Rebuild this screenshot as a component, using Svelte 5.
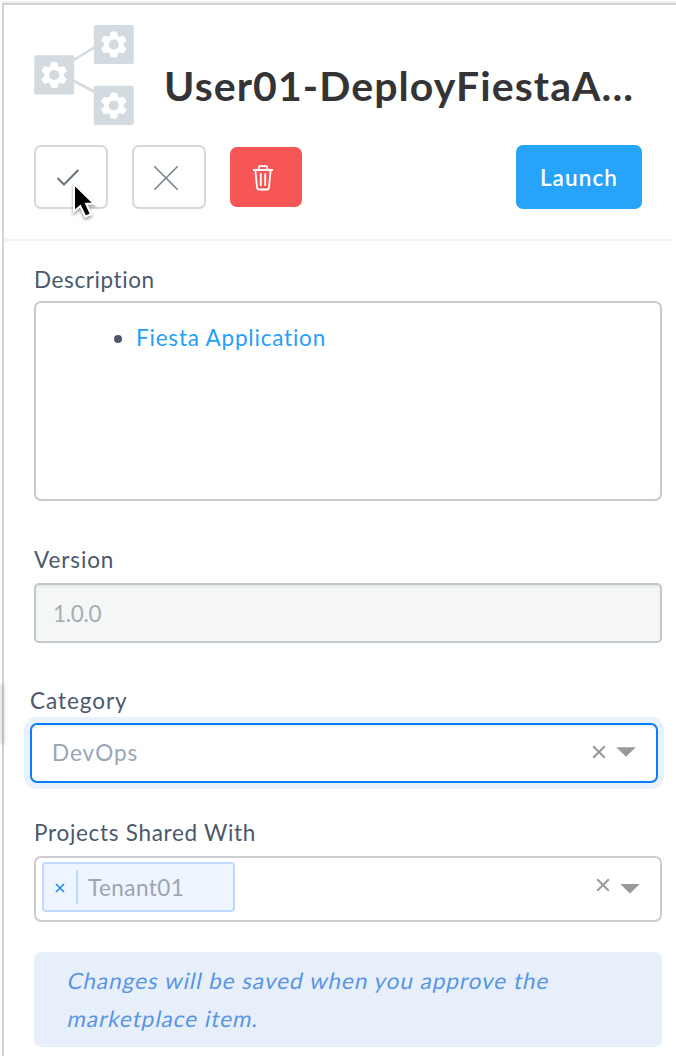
<script>
  const gear = 'M-2.6 -12.5H2.6L3.7 -8.6L5.9 -7.3L9.7 -8.4L12.3 -4L9.3 -1.2V1.2L12.3 4L9.7 8.4L5.9 7.3L3.7 8.6L2.6 12.5H-2.6L-3.7 8.6L-5.9 7.3L-9.7 8.4L-12.3 4L-9.3 1.2V-1.2L-12.3 -4L-9.7 -8.4L-5.9 -7.3L-3.7 -8.6Z';
  const nodes = [
    { x: 20.2, y: 50 },
    { x: 79.8, y: 19.5 },
    { x: 79.8, y: 80.5 }
  ];
</script>

{#snippet controls(drop)}
  <svg class="controls" width="46" height="18" viewBox="0 0 46 18">
    <path d="M3.2 2.2L14.8 13.8M14.8 2.2L3.2 13.8" fill="none" stroke="#999" stroke-width="2" />
    <path d="M26.3 0H45.8L36 9.6Z" transform="translate(0 {drop})" fill="#999" />
  </svg>
{/snippet}

<div class="panel">
  <header>
    <div class="heading">
      <svg width="100" height="100" viewBox="0 0 100 100">
        <path d="M39 35.5L61 22M39 55.5L61 67" fill="none" stroke="#d3dae0" stroke-width="2.6" />
        {#each nodes as n}
          <rect x={n.x - 20} y={n.y - 19.7} width="40" height="39.2" rx="2" fill="#d3dae0" />
          <g transform="translate({n.x} {n.y})">
            <path d={gear} fill="#fff" stroke="#fff" stroke-width="1" stroke-linejoin="round" />
            <circle r="5.1" fill="#d3dae0" />
          </g>
        {/each}
      </svg>
      <h1>User01-DeployFiestaA...</h1>
    </div>
    <div class="actions">
      <button class="outline" aria-label="Approve">
        <svg width="24" height="18" viewBox="0 0 24 18"><path d="M1.5 9L8 15.5L22.3 1" fill="none" stroke="#6b7780" stroke-width="2.1" /></svg>
        <svg class="pointer" width="28" height="42" viewBox="0 0 28 42">
          <path d="M3 2V29.5L9.3 24L14.4 34.7L20 32.2L15.1 21.8H23.2Z" fill="#000" stroke="#fff" stroke-width="2" />
        </svg>
      </button>
      <button class="outline" aria-label="Reject">
        <svg width="26" height="26" viewBox="0 0 26 26"><path d="M1.3 1.3L24.7 24.7M24.7 1.3L1.3 24.7" fill="none" stroke="#77828a" stroke-width="1.6" /></svg>
      </button>
      <button class="danger" aria-label="Delete">
        <svg width="20" height="26" viewBox="0 0 20 26" fill="none" stroke="#fff" stroke-width="1.8">
          <path d="M0 5H20M5.3 5L6 2Q6.2 1.2 7 1.2H13Q13.8 1.2 14 2L14.7 5M2.3 5L4 22.4Q4.3 24.5 6 24.5H14Q15.7 24.5 16 22.4L17.7 5M7.8 8.3V21M12.2 8.3V21" />
        </svg>
      </button>
      <button class="launch"><span>Launch</span></button>
    </div>
  </header>

  <main>
    <div class="label l-desc">Description</div>
    <div class="description">
      <ul><li><a href="#fiesta">Fiesta Application</a></li></ul>
    </div>

    <div class="label l-ver">Version</div>
    <div class="input"><span>1.0.0</span></div>

    <div class="category">
      <div class="label l-cat">Category</div>
      <div class="select"><span>DevOps</span>{@render controls(3.2)}</div>
    </div>

    <div class="label l-proj">Projects Shared With</div>
    <div class="multi">
      <div class="tag">
        <svg width="10" height="10" viewBox="0 0 10 10"><path d="M1 1L9 9M9 1L1 9" stroke="#1683ff" stroke-width="1.5" /></svg>
        <i></i>
        <span>Tenant01</span>
      </div>
      {@render controls(7)}
    </div>

    <div class="notice">
      <div class="n1">Changes will be saved when you approve the</div>
      <div class="n2">marketplace item.</div>
    </div>
  </main>
  <div class="edge"></div>
</div>

<style>
  :global(body) { background: #fff; overflow: hidden; }
  * { box-sizing: border-box; }
  .panel {
    position: relative;
    height: 1053px;
    margin: 3px 0 0 2px;
    border-top: 2px solid #d3d3d3;
    border-left: 2px solid #d3d3d3;
    box-shadow: 0 -2px 0 #efefef;
    font-family: Lato, "Open Sans", sans-serif;
    font-size: 22.5px;
    font-variant-ligatures: none;
    letter-spacing: 0.75px;
    color: #4b586b;
    white-space: nowrap;
  }
  header { width: 668px; height: 236px; border-bottom: 2px solid #f2f2f2; padding: 20px 30px 0; }
  .heading { display: flex; height: 120px; gap: 30px; }
  .heading svg { flex: none; }
  h1 { margin: 36px 0 0; font-size: 41px; line-height: 50px; height: 50px; font-weight: 700; color: #343436; letter-spacing: 1.08px; }
  .actions { display: flex; align-items: center; height: 64px; }
  button { position: relative; display: flex; align-items: center; justify-content: center; margin: 0; padding: 0; border: 0; border-radius: 7px; font: inherit; }
  .outline { width: 74px; height: 64px; margin-right: 24px; border: 2px solid #d3d9de; background: #fff; }
  .outline > svg:first-child { margin: 2px 0 0 -6px; }
  .outline .pointer { position: absolute; z-index: 2; left: 35px; top: 35px; filter: drop-shadow(0 2px 1.5px rgba(0, 0, 0, 0.4)); }
  .danger { width: 72px; height: 60px; background: #f65656; }
  .danger svg { margin: 2px 0 0 -6px; }
  .launch { width: 126px; height: 64px; margin-left: auto; background: #25a4f9; color: #fff; font-weight: 600; letter-spacing: 1.1px; }
  main { padding: 0 14px 0 30px; }
  .label { height: 28px; line-height: 28px; }
  .l-desc { margin-top: 25px; letter-spacing: 0.6px; }
  .description { height: 200px; margin-top: 7px; padding: 21px 0 0 80px; border: 2px solid #c5cbce; border-radius: 7px; }
  ul { margin: 0; padding: 0; list-style: none; }
  li { display: flex; align-items: center; height: 28px; gap: 14px; line-height: 28px; }
  li::before { content: ""; width: 8px; height: 8px; border-radius: 50%; background: #4b586b; margin: 1px 0 0 -2px; }
  a { color: #25a0f6; text-decoration: none; letter-spacing: 0.8px; }
  .l-ver { margin-top: 45px; letter-spacing: 0.9px; }
  .input { display: flex; align-items: center; height: 60px; margin-top: 9px; padding: 0 17px; border: 2px solid #c2c9ce; border-radius: 5px; background: #f5f7f7; box-shadow: inset 0 2px 2px rgba(0, 0, 0, 0.05); color: #a3acb4; letter-spacing: -0.3px; }
  .category { margin-left: -4px; margin-right: 4px; padding-top: 44px; }
  .l-cat { letter-spacing: 0.95px; }
  .select { display: flex; align-items: center; justify-content: space-between; height: 60px; margin-top: 8px; padding: 0 20px; border: 2px solid #087eff; border-radius: 7px; box-shadow: 0 0 0 6px #e9f1ff, inset 0 2px 2px rgba(0, 0, 0, 0.05); color: #99a5b7; letter-spacing: 1px; }
  .select span { margin-top: -2px; }
  .l-proj { margin-top: 36px; letter-spacing: 0.7px; }
  .multi { display: flex; justify-content: space-between; height: 66px; margin-top: 9px; padding: 4px 20px 0 6px; border: 2px solid #ccc; border-radius: 7px; }
  .multi .controls { margin-top: 15px; }
  .tag { display: flex; align-items: center; width: 193px; height: 50px; padding-left: 11px; border: 2px solid #bfdafe; border-radius: 4px; background: #eff5fe; color: #9aa4b5; letter-spacing: 0.45px; }
  .tag svg { margin-top: 2px; }
  .tag i { width: 2px; height: 34px; margin: 0 10px 0 11px; background: #bfdafe; }
  .notice { height: 95px; margin-top: 30px; padding: 10px 34px; border-radius: 7px; background: #e7f0fa; color: #5a95e5; line-height: 38px; letter-spacing: 0.96px; }
  .notice div { transform: skewX(-12deg); }
  .edge { position: absolute; left: -4px; top: 678px; width: 7px; height: 62px; border-radius: 4px; background: linear-gradient(90deg, rgba(0, 0, 0, 0.16), transparent); filter: blur(1.5px); }
</style>
